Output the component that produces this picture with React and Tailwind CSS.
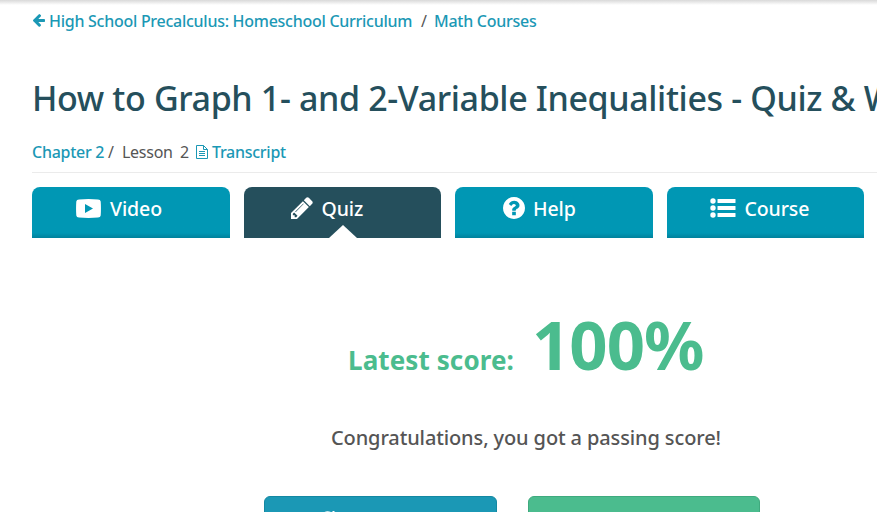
const FONT = 'font-["Noto_Sans",sans-serif]'

function Icon({ className, children, box = '0 0 1792 1792' }) {
  return (
    <svg viewBox={box} fill="currentColor" aria-hidden="true" className={className}>
      {children}
    </svg>
  )
}

const ArrowLeft = () => (
  <Icon box="64 189 1600 1558" className="mb-px h-[13px] w-[13px]">
    <path d="M1664 896v128q0 53-32.5 90.5t-84.5 37.5h-704l293 294q38 36 38 90t-38 90l-75 76q-37 37-90 37-52 0-91-37l-651-652q-37-37-37-90 0-52 37-91l651-650q38-38 91-38 52 0 90 38l75 74q38 38 38 91t-38 91l-293 293h704q52 0 84.5 37.5t32.5 90.5z" />
  </Icon>
)

const Document = () => (
  <svg viewBox="0 0 12 14" fill="none" stroke="currentColor" className="mb-px h-[14px] w-3" aria-hidden="true">
    <path d="M.5.5h7l4 4v9H.5zM7.5.5v4h4M3 6.5h6M3 8.5h6M3 10.5h6" />
  </svg>
)

const Video = () => (
  <Icon box="0 0 25 19" className="h-[19px] w-[25px]">
    <path fillRule="evenodd" d="M3 .5Q12.500-.3 22 .5 24.500.5 24.700 2.500 25.200 9.500 24.700 16.500 24.500 18.500 22 18.500 12.500 19.300 3 18.500.5 18.500.3 16.500-.2 9.500.3 2.500.5.5 3 .5ZM9 5v9l8-4.500Z" />
  </Icon>
)

const Pencil = () => (
  <Icon box="128 128 1536 1536" className="h-[22px] w-[22px]">
    <path d="M491 1536l91-91-235-235-91 91v107h128v128h107zm523-928q0-22-22-22-10 0-17 7l-542 542q-7 7-7 17 0 22 22 22 10 0 17-7l542-542q7-7 7-17zm-54-192l416 416-832 832h-416v-416zm683 96q0 53-37 90l-166 166-416-416 166-165q36-38 90-38 53 0 91 38l235 234q37 39 37 91z" />
  </Icon>
)

const Question = () => (
  <Icon box="128 128 1536 1536" className="h-[22px] w-[22px]">
    <path d="M1024 1376v-192q0-14-9-23t-23-9h-192q-14 0-23 9t-9 23v192q0 14 9 23t23 9h192q14 0 23-9t9-23zm256-672q0-88-55.5-163t-138.5-116-170-41q-243 0-371 213-15 24 8 42l132 100q7 6 19 6 16 0 25-12 53-68 86-92 34-24 86-24 48 0 85.500 26t37.500 59q0 38-20 61t-68 45q-63 28-115.500 86.500t-52.500 125.500v36q0 14 9 23t23 9h192q14 0 23-9t9-23q0-19 21.500-49.500t54.500-49.500q32-18 49-28.500t46-35 44.500-48 28-60.500 12.500-81zm384 192q0 209-103 385.500t-279.500 279.500-385.500 103-385.500-103-279.500-279.500-103-385.500 103-385.500 279.500-279.500 385.500-103 385.500 103 279.500 279.500 103 385.500z" />
  </Icon>
)

const List = () => (
  <Icon box="0 0 26 20" className="h-5 w-[26px]">
    <circle cx="3" cy="3" r="2.700" />
    <circle cx="3" cy="10" r="2.700" />
    <circle cx="3" cy="17" r="2.700" />
    <rect x="7.500" y="1" width="18" height="4" rx=".5" />
    <rect x="7.500" y="8" width="18" height="4" rx=".5" />
    <rect x="7.500" y="15" width="18" height="4" rx=".5" />
  </Icon>
)

const tabs = [
  { name: 'Video', Glyph: Video, pad: 'pl-11', gap: 'gap-[9px]' },
  { name: 'Quiz', Glyph: Pencil, pad: 'pl-[47px]', gap: 'gap-[9px]', active: true },
  { name: 'Help', Glyph: Question, pad: 'pl-12', gap: 'gap-2' },
  { name: 'Course', Glyph: List, pad: 'pl-[43px]', gap: 'gap-[9px]' },
]

function Tab({ name, Glyph, pad, gap, active }) {
  return (
    <button
      className={`relative flex h-[51px] items-start rounded-t-lg pt-[7px] text-[19.5px] leading-[30px] font-medium tracking-[-0.1px] text-white ${pad} ${gap} ${
        active ? 'bg-[#254f5c]' : 'bg-[#0097b4] bg-linear-to-t from-[#00819c] to-[#0097b4] to-[5px]'
      }`}
    >
      <span className="flex h-7 items-center">
        <Glyph />
      </span>
      {name}
      {active && (
        <svg viewBox="0 0 28 13" className="absolute bottom-0 left-[85px] h-[13px] w-7" fill="white" aria-hidden="true">
          <path d="M0 13 14 0l14 13z" />
        </svg>
      )}
    </button>
  )
}

export default function App() {
  return (
    <div className={`${FONT} h-[512px] w-[877px] overflow-hidden bg-white text-[#555]`}>
      <div className="h-[5px] bg-linear-to-b from-[#d9d9d9] to-white" />
      <main className="pl-8">
        <nav className="flex h-8 items-center text-[16px] font-medium tracking-[-0.27px] text-[#1b98b5]">
          <a className="flex items-center gap-1">
            <ArrowLeft />
            <span className="w-[363px] whitespace-nowrap">High School Precalculus: Homeschool Curriculum</span>
          </a>
          <span className="w-[22px] pl-[9px] font-normal text-[#555]">/</span>
          <a>Math Courses</a>
        </nav>
        <h1 className="mt-[37px] text-[34px] leading-[48px] font-medium tracking-[-0.365px] whitespace-nowrap text-[#254f5c]">
          How to Graph 1- and 2-Variable Inequalities - Quiz &amp; Worksheet
        </h1>
        <div className="mt-[19px] flex h-8 items-start border-b border-[#ebebeb] text-[16px] leading-[22px] tracking-[-0.27px]">
          <a className="w-[76px] font-medium text-[#1b98b5]">Chapter 2</a>
          <span className="w-[14px]">/</span>
          <span className="w-[58px]">Lesson</span>
          <span className="w-4">2</span>
          <a className="flex items-center gap-1 font-medium text-[#1b98b5]">
            <Document />
            Transcript
          </a>
        </div>
        <div className="mt-[14px] grid w-[832px] grid-cols-4 gap-[14px]">
          {tabs.map((tab) => (
            <Tab key={tab.name} {...tab} />
          ))}
        </div>
      </main>
      <section className="pt-[57px]">
        <div className="flex items-baseline pl-[348px] font-bold text-[#4bbc8e]">
          <span className="w-[184px] text-[26px] tracking-[0.1px]">Latest score:</span>
          <span className="text-[67px] leading-[98px] tracking-[-1px]">100%</span>
        </div>
        <p className="mt-[31px] pl-[331px] text-[20px] leading-7 font-medium tracking-[-0.12px]">
          Congratulations, you got a passing score!
        </p>
        <div className="mt-11 flex gap-[31px] pl-[264px]">
          <button className="flex h-12 w-[233px] justify-start rounded-md border border-[#1488a2] bg-[#1b98b5] pt-[13px] pl-[55px]">
            <svg viewBox="0 0 16 16" className="h-4 w-4" fill="none" stroke="white" strokeWidth="2" aria-hidden="true">
              <path d="M13 5.500A6 6 0 1 0 13 11M13.500 1v5h-5" />
            </svg>
          </button>
          <button className="h-12 w-[232px] rounded-md border border-[#3faa7e] bg-[#4bbc8e]" />
        </div>
      </section>
    </div>
  )
}
